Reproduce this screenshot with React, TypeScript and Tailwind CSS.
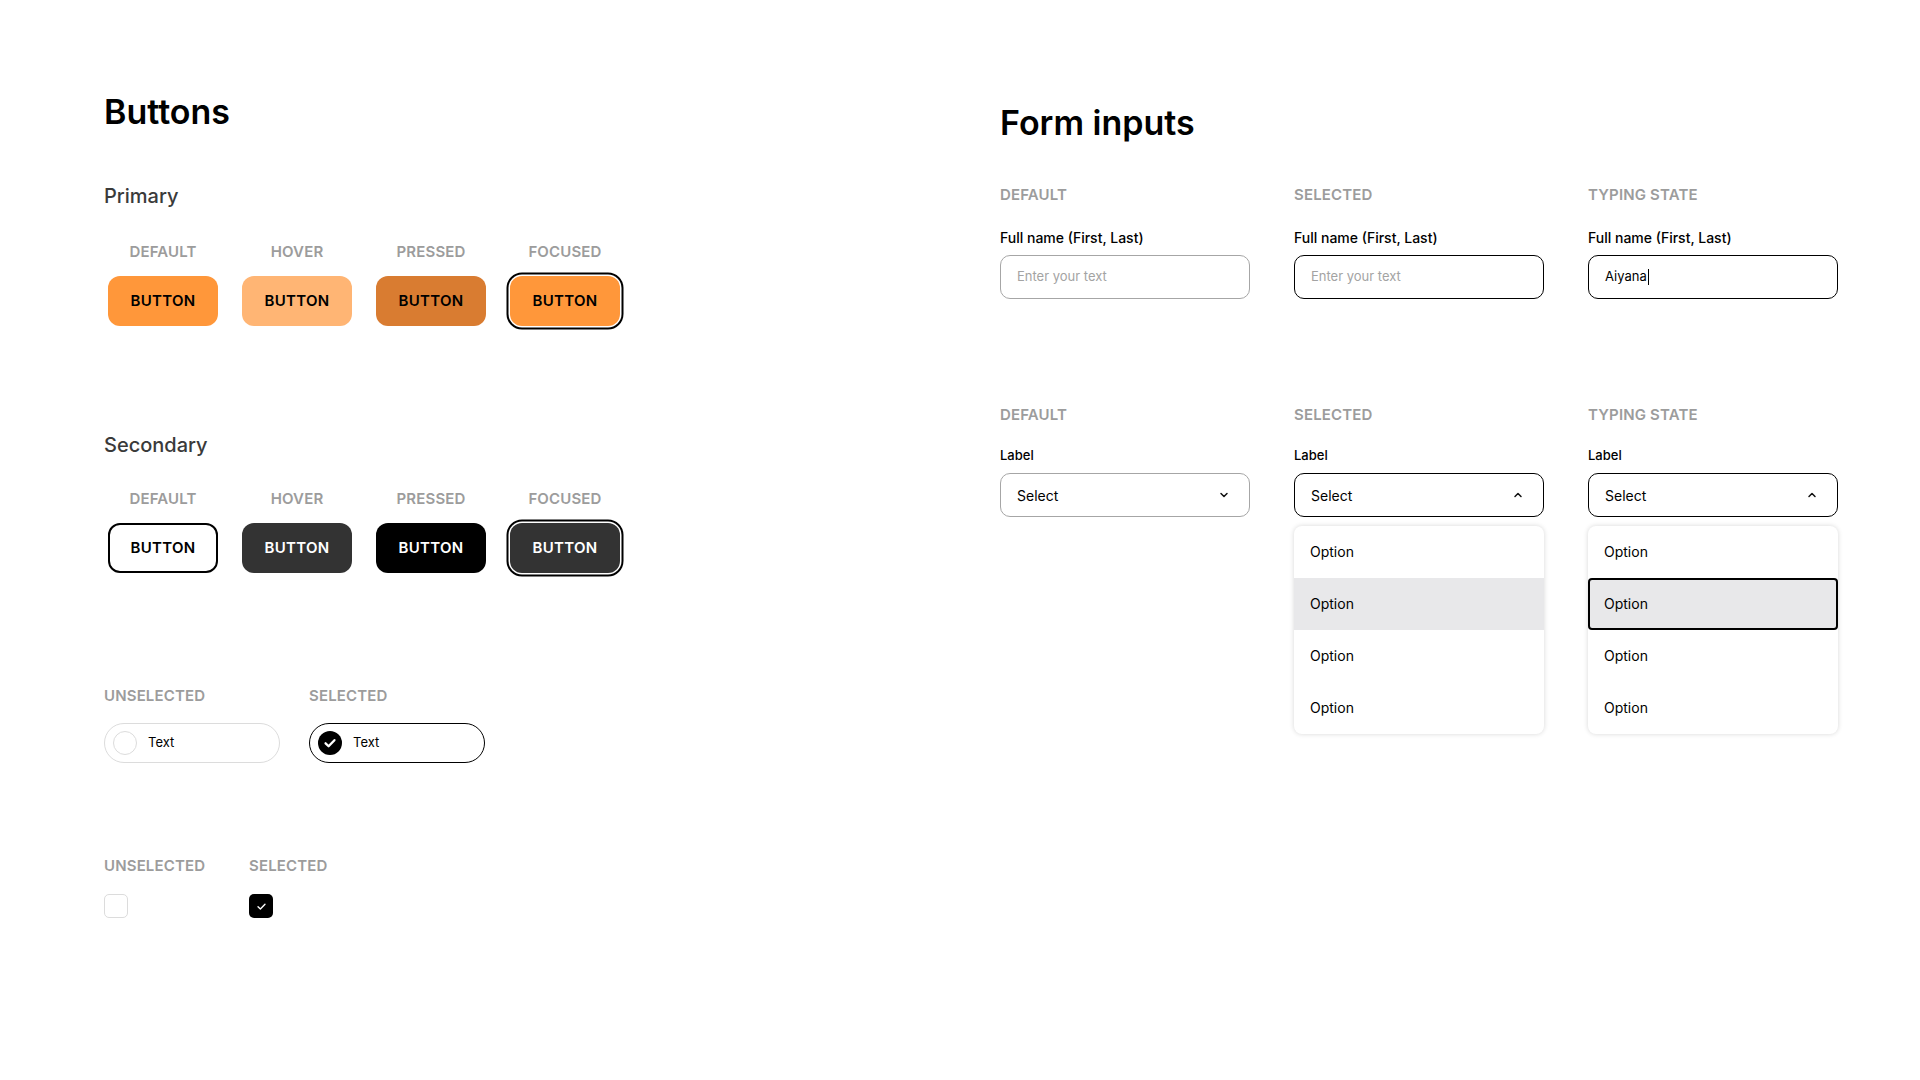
import { ReactNode } from "react";

const stateLabel = "text-[15px] leading-5 font-semibold text-[#9c9c9c] tracking-[0.01em]";

function Check({ size = 12, stroke = 2 }: { size?: number; stroke?: number }) {
  return (
    <svg width={size} height={size} viewBox="0 0 12 12" fill="none">
      <path d="M2.2 6.3 4.8 8.8 9.8 3.6" stroke="white" strokeWidth={stroke} strokeLinecap="round" strokeLinejoin="round" />
    </svg>
  );
}

function Chevron({ up = false }: { up?: boolean }) {
  return (
    <svg width="12" height="12" viewBox="0 0 12 12" fill="none">
      <path d={up ? "M3 7.5 6 4.5 9 7.5" : "M3 4.5 6 7.5 9 4.5"} stroke="#111" strokeWidth="1.5" strokeLinecap="round" strokeLinejoin="round" />
    </svg>
  );
}

function ButtonRow({ items }: { items: { label: string; cls: string }[] }) {
  return (
    <div className="ml-[4px] flex gap-[24px]">
      {items.map((b) => (
        <div key={b.label} className="flex w-[110px] flex-col items-center">
          <div className={stateLabel}>{b.label}</div>
          <button className={`mt-[14px] h-[50px] w-[110px] rounded-[12px] text-[15px] font-semibold tracking-[0.02em] ${b.cls}`}>
            BUTTON
          </button>
        </div>
      ))}
    </div>
  );
}

function Col({ label, field, children }: { label: string; field: string; children: ReactNode }) {
  return (
    <div className="w-[250px]">
      <div className={stateLabel}>{label}</div>
      <div className="mt-[23px] text-[14px] leading-5 font-medium text-black">{field}</div>
      {children}
    </div>
  );
}

function Dropdown({ framed }: { framed: boolean }) {
  return (
    <div className="absolute left-0 top-full mt-[9px] w-[250px] overflow-hidden rounded-[8px] bg-white shadow-[0_0_5px_rgba(0,0,0,0.16)]">
      {[0, 1, 2, 3].map((i) => (
        <div
          key={i}
          className={`flex h-[52px] items-center px-4 pb-[2px] text-[14px] text-black ${
            i === 1 ? (framed ? "rounded-[4px] border-2 border-black bg-[#e8e8ea] px-[14px]" : "bg-[#e8e8ea]") : ""
          }`}
        >
          Option
        </div>
      ))}
    </div>
  );
}

export default function App() {
  return (
    <div className="flex min-h-screen w-[1920px] bg-white pl-[104px] font-['Inter',sans-serif] text-black">
      {/* left column */}
      <div className="w-[896px] pt-[92px]">
        <h1 className="text-[34px] leading-10 font-semibold">Buttons</h1>

        <h2 className="mt-[50px] text-[20px] leading-7 font-medium text-[#3a3a3a]">Primary</h2>
        <div className="mt-[32px]">
          <ButtonRow
            items={[
              { label: "DEFAULT", cls: "bg-[#ff973a] text-black" },
              { label: "HOVER", cls: "bg-[#ffb574] text-black" },
              { label: "PRESSED", cls: "bg-[#d97c31] text-black" },
              { label: "FOCUSED", cls: "bg-[#ff973a] text-black ring-2 ring-black ring-offset-[1.5px]" },
            ]}
          />
        </div>

        <h2 className="mt-[105px] text-[20px] leading-7 font-medium text-[#3a3a3a]">Secondary</h2>
        <div className="mt-[30px]">
          <ButtonRow
            items={[
              { label: "DEFAULT", cls: "bg-white text-black border-2 border-black" },
              { label: "HOVER", cls: "bg-[#333333] text-white" },
              { label: "PRESSED", cls: "bg-black text-white" },
              { label: "FOCUSED", cls: "bg-[#333333] text-white ring-2 ring-black ring-offset-[1.5px]" },
            ]}
          />
        </div>

        <div className="mt-[113px] flex gap-[29px]">
          <div className="w-[176px]">
            <div className={stateLabel}>UNSELECTED</div>
            <div className="mt-[17px] flex h-[40px] items-center gap-[11px] rounded-full border-[1.5px] border-[#dcdcdc] pl-[8px]">
              <span className="h-[24px] w-[24px] rounded-full border-[1.5px] border-[#dcdcdc]" />
              <span className="text-[13px] text-black">Text</span>
            </div>
          </div>
          <div className="w-[176px]">
            <div className={stateLabel}>SELECTED</div>
            <div className="mt-[17px] flex h-[40px] items-center gap-[11px] rounded-full border-[1.5px] border-black pl-[8px]">
              <span className="flex h-[24px] w-[24px] items-center justify-center rounded-full bg-black">
                <Check size={14} stroke={2} />
              </span>
              <span className="text-[13px] text-black">Text</span>
            </div>
          </div>
        </div>

        <div className="mt-[93px] flex gap-[49px]">
          <div className="w-[96px]">
            <div className={stateLabel}>UNSELECTED</div>
            <div className="mt-[18px] h-[24px] w-[24px] rounded-[5px] border-[1.5px] border-[#dcdcdc]" />
          </div>
          <div>
            <div className={stateLabel}>SELECTED</div>
            <div className="mt-[18px] flex h-[24px] w-[24px] items-center justify-center rounded-[5px] bg-black">
              <Check size={11} stroke={1.5} />
            </div>
          </div>
        </div>
      </div>

      {/* right column */}
      <div className="pt-[103px]">
        <h1 className="text-[34px] leading-10 font-semibold">Form inputs</h1>

        <div className="mt-[42px] flex gap-[44px]">
          <Col label="DEFAULT" field="Full name (First, Last)">
            <div className="mt-[7px] flex h-[44px] items-center rounded-[10px] border-[1.5px] border-[#a6a6a6] px-4 text-[13px] text-[#a3a3a3]">
              Enter your text
            </div>
          </Col>
          <Col label="SELECTED" field="Full name (First, Last)">
            <div className="mt-[7px] flex h-[44px] items-center rounded-[10px] border-[1.5px] border-black px-4 text-[13px] text-[#a3a3a3]">
              Enter your text
            </div>
          </Col>
          <Col label="TYPING STATE" field="Full name (First, Last)">
            <div className="mt-[7px] flex h-[44px] items-center rounded-[10px] border-[1.5px] border-black px-4 text-[13px] text-black">
              Aiyana
              <span className="ml-[1px] h-[16px] w-[1px] bg-black" />
            </div>
          </Col>
        </div>

        <div className="mt-[106px] flex gap-[44px]">
          <div className="w-[250px]">
            <div className={stateLabel}>DEFAULT</div>
            <div className="mt-[20px] text-[13px] leading-5 font-medium">Label</div>
            <div className="mt-[8px] flex h-[44px] items-center justify-between rounded-[10px] border-[1.5px] border-[#a6a6a6] pl-4 pr-[19px] text-[14px]">
              Select
              <Chevron />
            </div>
          </div>
          <div className="w-[250px]">
            <div className={stateLabel}>SELECTED</div>
            <div className="mt-[20px] text-[13px] leading-5 font-medium">Label</div>
            <div className="relative mt-[8px]">
              <div className="flex h-[44px] items-center justify-between rounded-[10px] border-[1.5px] border-black pl-4 pr-[19px] text-[14px]">
                Select
                <Chevron up />
              </div>
              <Dropdown framed={false} />
            </div>
          </div>
          <div className="w-[250px]">
            <div className={stateLabel}>TYPING STATE</div>
            <div className="mt-[20px] text-[13px] leading-5 font-medium">Label</div>
            <div className="relative mt-[8px]">
              <div className="flex h-[44px] items-center justify-between rounded-[10px] border-[1.5px] border-black pl-4 pr-[19px] text-[14px]">
                Select
                <Chevron up />
              </div>
              <Dropdown framed />
            </div>
          </div>
        </div>
      </div>
    </div>
  );
}
